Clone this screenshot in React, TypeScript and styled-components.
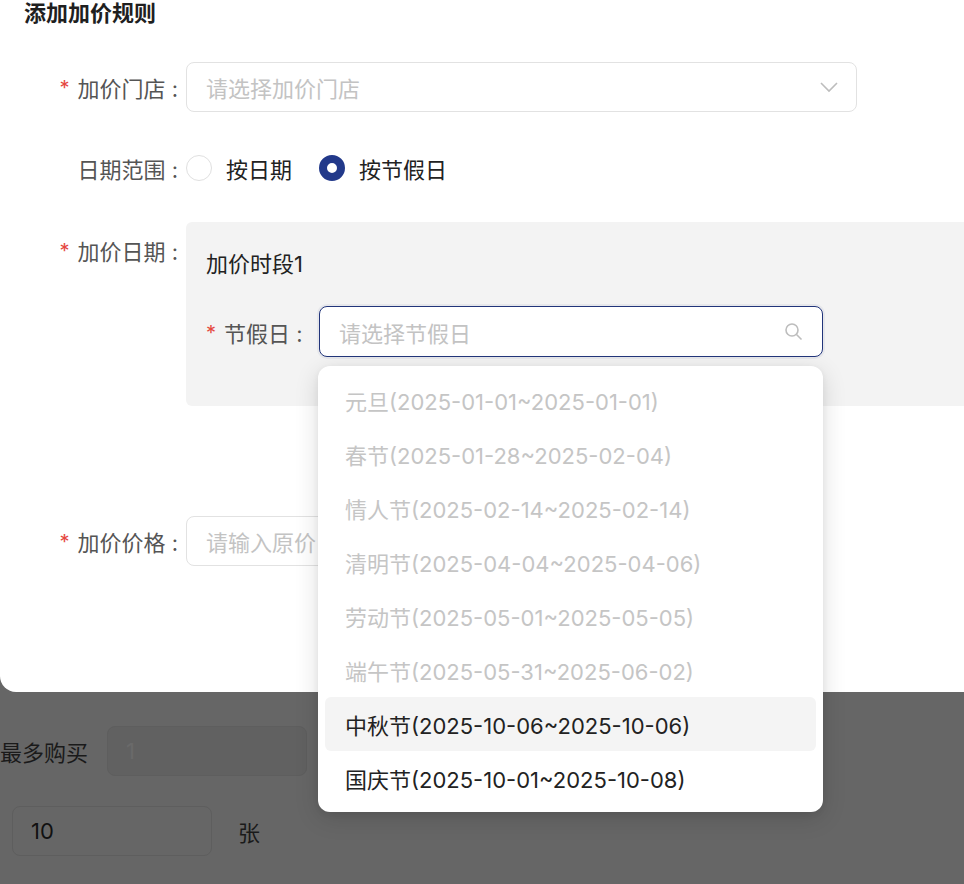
import React from "react";
import styled, { createGlobalStyle } from "styled-components";

const Global = createGlobalStyle`
  html, body { margin: 0; padding: 0; background: #666; overflow: hidden; }
  body { font-family: Inter, "Noto Sans CJK SC", sans-serif; width: 964px; height: 884px; }
`;

const Page = styled.div`
  position: relative; width: 964px; height: 884px; overflow: hidden;
`;
const BackContent = styled.div`
  padding-top: 726px; display: flex; flex-direction: column; gap: 30px;
`;
const BackRow = styled.div<{ $pl: number; $gap: number }>`
  display: flex; align-items: center; gap: ${p => p.$gap}px; padding-left: ${p => p.$pl}px;
  font-size: 22px; color: #1a1a1a;
`;
const BackInput = styled.div<{ $muted?: boolean }>`
  width: 200px; height: 50px; box-sizing: border-box; border: 1px solid #5e5e5e;
  border-radius: 8px; display: flex; align-items: center; padding-left: 18px;
  font-size: 22px; color: ${p => (p.$muted ? "#6a6a6a" : "#111")};
  background: ${p => (p.$muted ? "#616161" : "transparent")};
`;
const Modal = styled.div`
  position: absolute; left: 0; top: -30px; width: 1100px; height: 722px;
  background: #fff; border-radius: 16px; box-sizing: border-box; padding: 30px 0 0 24px;
`;
const Title = styled.div`
  font-size: 22px; font-weight: 700; color: #1f1f1f; line-height: 26px; margin-bottom: 36px;
`;
const Row = styled.div<{ $h: number; $mb: number; $top?: boolean }>`
  display: flex; align-items: ${p => (p.$top ? "flex-start" : "center")};
  min-height: ${p => p.$h}px; margin-bottom: ${p => p.$mb}px;
`;
const Label = styled.div<{ $w: number; $pt?: number; $left?: boolean }>`
  width: ${p => p.$w}px; flex-shrink: 0; text-align: ${p => (p.$left ? "left" : "right")};
  padding-right: 8px; box-sizing: border-box;
  font-size: 22px; color: #555; padding-top: ${p => p.$pt ?? 0}px; white-space: nowrap;
`;
const Star = styled.span`
  color: #e5483f; margin-right: 8px; font-size: 20px; vertical-align: 2px;
`;
const Field = styled.div<{ $w: number; $focus?: boolean }>`
  width: ${p => p.$w}px; height: 50px; box-sizing: border-box; border-radius: 8px;
  border: 1px solid ${p => (p.$focus ? "#22357a" : "#e2e2e2")}; background: #fff;
  display: flex; align-items: center; justify-content: space-between; padding: 0 18px 0 19px;
  font-size: 22px; color: #c3c3c3; white-space: nowrap; overflow: hidden;
  box-shadow: ${p => (p.$focus ? "0 0 0 2px rgba(34,53,122,0.06)" : "none")};
`;
const Radios = styled.div`display: flex; align-items: center; gap: 27px;`;
const RadioItem = styled.div`display: flex; align-items: center; gap: 14px; font-size: 22px; color: #222;`;
const Dot = styled.span<{ $on?: boolean }>`
  width: 26px; height: 26px; border-radius: 50%; box-sizing: border-box;
  border: ${p => (p.$on ? "8px solid #22398a" : "1px solid #e0e0e0")}; background: #fff;
`;
const Panel = styled.div`
  flex: 1; height: 184px; background: #f3f3f3; border-radius: 6px 0 0 6px;
  padding: 24px 0 0 20px; box-sizing: border-box; position: relative;
`;
const PanelTitle = styled.div`font-size: 22px; color: #222; margin-bottom: 28px;`;
const Anchor = styled.div`position: relative;`;
const Dropdown = styled.div`
  position: absolute; left: -1px; top: 60px; width: 505px; background: #fff; border-radius: 12px;
  box-shadow: 0 6px 24px rgba(0,0,0,0.14), 0 2px 6px rgba(0,0,0,0.06);
  padding: 7px 7px; box-sizing: border-box; z-index: 5;
`;
const Option = styled.div<{ $dis?: boolean; $hl?: boolean }>`
  height: 54px; display: flex; align-items: center; padding-left: 20px; border-radius: 6px;
  font-size: 22px; color: ${p => (p.$dis ? "#c5c5c5" : "#222")};
  background: ${p => (p.$hl ? "#f4f4f4" : "transparent")};
`;

const options = [
  ["元旦(2025-01-01~2025-01-01)", true],
  ["春节(2025-01-28~2025-02-04)", true],
  ["情人节(2025-02-14~2025-02-14)", true],
  ["清明节(2025-04-04~2025-04-06)", true],
  ["劳动节(2025-05-01~2025-05-05)", true],
  ["端午节(2025-05-31~2025-06-02)", true],
  ["中秋节(2025-10-06~2025-10-06)", false],
  ["国庆节(2025-10-01~2025-10-08)", false],
] as const;

export default function App() {
  return (
    <Page>
      <Global />
      <BackContent>
        <BackRow $pl={0} $gap={19}>最多购买<BackInput $muted>1</BackInput></BackRow>
        <BackRow $pl={12} $gap={26}><BackInput>10</BackInput>张</BackRow>
      </BackContent>
      <Modal>
        <Title>添加加价规则</Title>
        <Row $h={50} $mb={31}>
          <Label $w={162}><Star>*</Star>加价门店 :</Label>
          <Field $w={671}>
            请选择加价门店
            <svg width="18" height="12" viewBox="0 0 18 12"><path d="M1 2l8 8 8-8" fill="none" stroke="#bdbdbd" strokeWidth="1.6" /></svg>
          </Field>
        </Row>
        <Row $h={50} $mb={29}>
          <Label $w={162}>日期范围 :</Label>
          <Radios>
            <RadioItem><Dot />按日期</RadioItem>
            <RadioItem><Dot $on />按节假日</RadioItem>
          </Radios>
        </Row>
        <Row $h={184} $mb={110} $top>
          <Label $w={162} $pt={12}><Star>*</Star>加价日期 :</Label>
          <Panel>
            <PanelTitle>加价时段1</PanelTitle>
            <Row $h={51} $mb={0}>
              <Label $w={113} $left><Star>*</Star>节假日 :</Label>
              <Anchor>
                <Field $w={504} $focus style={{ height: 51 }}>
                  请选择节假日
                  <svg width="20" height="20" viewBox="0 0 20 20"><circle cx="8" cy="8" r="6" fill="none" stroke="#bdbdbd" strokeWidth="1.6" /><path d="M12.5 12.5l5 5" stroke="#bdbdbd" strokeWidth="1.6" /></svg>
                </Field>
                <Dropdown>
                  {options.map(([t, d]) => (
                    <Option key={t} $dis={d} $hl={t.startsWith("中秋")}>{t}</Option>
                  ))}
                </Dropdown>
              </Anchor>
            </Row>
          </Panel>
        </Row>
        <Row $h={50} $mb={0}>
          <Label $w={162}><Star>*</Star>加价价格 :</Label>
          <Field $w={300}>请输入原价</Field>
        </Row>
      </Modal>
    </Page>
  );
}
